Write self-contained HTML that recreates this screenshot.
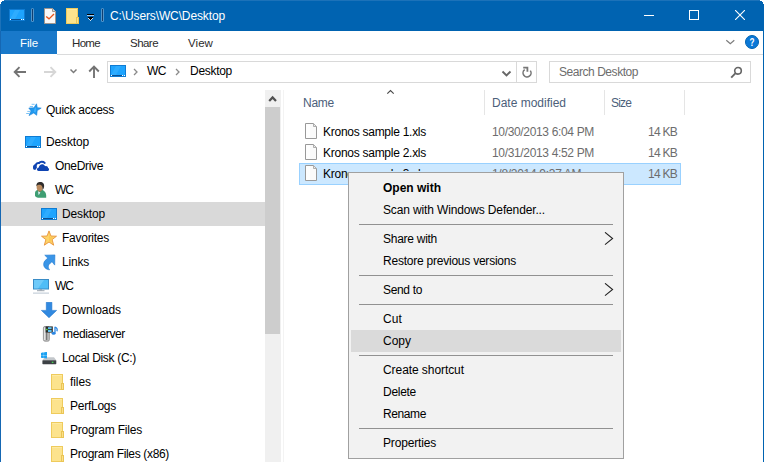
<!DOCTYPE html>
<html><head><meta charset="utf-8"><title>C:\Users\WC\Desktop</title>
<style>
html,body{margin:0;padding:0;background:#fff}
body{width:764px;height:462px;position:relative;overflow:hidden;font-family:"Liberation Sans",sans-serif;font-size:12px}
body>div,body>svg,body>span{position:absolute;display:block}
.t{line-height:16px;white-space:pre}
</style></head>
<body>
<div style="left:0px;top:0px;width:764px;height:31px;background:#0063b1;"></div>
<div style="left:0px;top:0px;width:764px;height:1px;background:#1c72b9;"></div>
<div style="left:0px;top:0px;width:1px;height:31px;background:#1c72b9;"></div>
<div style="left:0px;top:31px;width:1px;height:431px;background:#1567b3;"></div>
<div style="left:763px;top:31px;width:1px;height:431px;background:#0063b1;"></div>
<div style="left:0px;top:0px;width:4px;height:1px;background:#fff;"></div>
<div style="left:760px;top:0px;width:4px;height:1px;background:#fff;"></div>
<div style="left:0px;top:1px;width:2px;height:1px;background:#fff;"></div>
<div style="left:762px;top:1px;width:2px;height:1px;background:#fff;"></div>
<div style="left:0px;top:2px;width:1px;height:1px;background:#fff;"></div>
<div style="left:763px;top:2px;width:1px;height:1px;background:#fff;"></div>
<div style="left:0px;top:3px;width:1px;height:1px;background:#fff;"></div>
<div style="left:763px;top:3px;width:1px;height:1px;background:#fff;"></div>
<svg style="left:9px;top:9px" width="16" height="12" viewBox="0 0 16 12"><rect x="0.5" y="0.5" width="15" height="11" fill="#1ea4fe" stroke="#0f7bd2"/>
<path d="M6 1 L11 1 L6 10 L1 10 Z" fill="#3db3ff" opacity=".55"/>
<rect x="2" y="10" width="10" height="1" fill="#0a4f92"/>
<rect x="1" y="10" width="1" height="1" fill="#fff"/><rect x="12" y="10" width="1" height="1" fill="#fff"/><rect x="14" y="10" width="1" height="1" fill="#fff"/></svg>
<div style="left:31px;top:8px;width:3px;height:14px;background:rgba(255,255,255,.32);border-radius:1.5px;"></div>
<div style="left:32px;top:9px;width:1px;height:12px;background:#123f70;"></div>
<div style="left:101px;top:8px;width:3px;height:14px;background:rgba(255,255,255,.32);border-radius:1.5px;"></div>
<div style="left:102px;top:9px;width:1px;height:12px;background:#123f70;"></div>
<svg style="left:44px;top:8px" width="12" height="16" viewBox="0 0 12 16"><path d="M0.5 0.5 H8.5 L11.5 3.5 V15.5 H0.5 Z" fill="#f8f8f8" stroke="#a0968f"/>
<path d="M8.5 0.5 V3.5 H11.5" fill="#ddd" stroke="#a0968f"/>
<path d="M2.2 8.5 L5 10.9 L10 5.9" fill="none" stroke="#e8541c" stroke-width="1.4"/></svg>
<svg style="left:66px;top:8px" width="13" height="16" viewBox="0 0 13 16"><rect x="0.5" y="0.5" width="11" height="15" fill="#fce38d" stroke="#efcb5c"/>
<rect x="1" y="1" width="10" height="1" fill="#fdeaa3"/>
<rect x="10.5" y="9.5" width="2" height="6" fill="#fbe08a" stroke="#eac556"/></svg>
<svg style="left:86px;top:12px" width="10" height="10" viewBox="0 0 10 10"><rect x="1" y="2" width="7" height="1" fill="#000"/><rect x="1" y="3" width="7" height="1" fill="#a5cdf0"/>
<rect x="2" y="5" width="5" height="1" fill="#000"/><rect x="3" y="6" width="3" height="1" fill="#000"/><rect x="4" y="7" width="1" height="1" fill="#000"/>
<path d="M2 6h1v1h-1zM3 7h1v1h-1zM4 8h1v1h-1zM5 7h1v1h-1zM6 6h1v1h-1z" fill="#c9e0f5"/></svg>
<div style="left:644px;top:15px;width:10px;height:1px;background:#fff;"></div>
<div style="left:689px;top:10px;width:10px;height:10px;background:transparent;border:1px solid #fff;box-sizing:border-box;"></div>
<svg style="left:735px;top:10px" width="10" height="10" viewBox="0 0 10 10"><path d="M0 0 L10 10 M10 0 L0 10" stroke="#fff" stroke-width="1.1" fill="none"/></svg>
<div style="left:1px;top:31px;width:56px;height:23px;background:#1979ca;"></div>
<div style="left:57px;top:54px;width:706px;height:1px;background:#dadbdc;"></div>
<svg style="left:725px;top:38px" width="11" height="8" viewBox="0 0 11 8"><path d="M1.3 2.2 L5.3 5.8 L9.3 2.2" fill="none" stroke="#7c7c7c" stroke-width="1.2"/></svg>
<svg style="left:745px;top:35px" width="14" height="14" viewBox="0 0 14 14"><circle cx="7" cy="7" r="6.5" fill="#0a78d7" stroke="#0063b1"/>
<text x="7.1" y="10.9" font-family="Liberation Sans, sans-serif" font-size="10.5" font-weight="700" fill="#fff" text-anchor="middle" textLength="5" lengthAdjust="spacingAndGlyphs">?</text></svg>
<svg style="left:13px;top:66px" width="14" height="12" viewBox="0 0 14 12"><path d="M13 6 H2 M6.5 1.2 L1.7 6 L6.5 10.8" fill="none" stroke="#737373" stroke-width="1.9"/></svg>
<svg style="left:43px;top:66px" width="14" height="12" viewBox="0 0 14 12"><path d="M1 6 H12 M7.5 1.2 L12.3 6 L7.5 10.8" fill="none" stroke="#d6d6d6" stroke-width="1.9"/></svg>
<svg style="left:69px;top:68px" width="9" height="7" viewBox="0 0 9 7"><path d="M1.5 1.5 L4.5 4.5 L7.5 1.5" fill="none" stroke="#7a7a7a" stroke-width="1.5"/></svg>
<svg style="left:87px;top:65px" width="14" height="14" viewBox="0 0 14 14"><path d="M7 13 V2 M2.2 6.5 L7 1.7 L11.8 6.5" fill="none" stroke="#737373" stroke-width="1.9"/></svg>
<div style="left:107px;top:61px;width:430px;height:22px;background:#fff;border:1px solid #d9d9d9;box-sizing:border-box;"></div>
<svg style="left:110px;top:65px" width="16" height="12" viewBox="0 0 16 12"><rect x="0.5" y="0.5" width="15" height="11" fill="#1ea4fe" stroke="#0f7bd2"/>
<path d="M6 1 L11 1 L6 10 L1 10 Z" fill="#3db3ff" opacity=".55"/>
<rect x="2" y="10" width="10" height="1" fill="#0a4f92"/>
<rect x="1" y="10" width="1" height="1" fill="#fff"/><rect x="12" y="10" width="1" height="1" fill="#fff"/><rect x="14" y="10" width="1" height="1" fill="#fff"/></svg>
<svg style="left:132px;top:68px" width="7" height="8" viewBox="0 0 7 8"><path d="M2 1 L5 4 L2 7" fill="none" stroke="#8a8a8a" stroke-width="1.3"/></svg>
<svg style="left:174px;top:68px" width="7" height="8" viewBox="0 0 7 8"><path d="M2 1 L5 4 L2 7" fill="none" stroke="#8a8a8a" stroke-width="1.3"/></svg>
<svg style="left:501px;top:69.7px" width="11" height="8" viewBox="0 0 11 8"><path d="M1.5 1.5 L5.5 5.5 L9.5 1.5" fill="none" stroke="#666" stroke-width="1.9"/></svg>
<div style="left:516px;top:62px;width:1px;height:20px;background:#d9d9d9;"></div>
<svg style="left:521px;top:66px" width="12" height="13" viewBox="0 0 12 13"><path d="M9.3 4.6 A4 4 0 1 1 3.7 3.7" fill="none" stroke="#777" stroke-width="1.6"/>
<path d="M2.2 1.6 H6.4 V5.8" fill="none" stroke="#777" stroke-width="1.8"/></svg>
<div style="left:549px;top:61px;width:202px;height:22px;background:#fff;border:1px solid #d9d9d9;box-sizing:border-box;"></div>
<svg style="left:730px;top:66px" width="13" height="13" viewBox="0 0 13 13"><circle cx="8" cy="4.8" r="3.3" fill="none" stroke="#666" stroke-width="1.6"/><path d="M5.6 7.2 L1.2 11.6" stroke="#666" stroke-width="1.9"/></svg>
<div style="left:1px;top:202px;width:264px;height:24px;background:#d9d9d9;"></div>
<div style="left:265px;top:90px;width:16px;height:372px;background:#f0f0f0;"></div>
<div style="left:265px;top:107px;width:15px;height:227px;background:#cdcdcd;"></div>
<svg style="left:268px;top:94px" width="10" height="9" viewBox="0 0 10 9"><path d="M1.2 7 L4.6 3.4 L8 7" fill="none" stroke="#505050" stroke-width="2.2"/></svg>
<div style="left:283px;top:90px;width:1px;height:372px;background:#f3f3f3;"></div>
<svg style="left:26px;top:103px" width="16" height="14" viewBox="0 0 16 14"><path d="M10.5 0.8 L11.3 4.7 L15.2 5.1 L11.2 7.6 L10.7 12.3 L7.7 10 L3 12.6 L5 7.9 L2.8 5 L7.9 4.8 Z" fill="#2299ee" stroke="#1a82d6" stroke-width=".6" stroke-linejoin="round"/>
<path d="M8.4 6 L9.8 4 L10.2 7 L9.6 9.5 L7.8 8.8 Z" fill="#45b4ff" opacity=".8"/>
<path d="M5.6 1.3 H8.6 M3.8 3.5 H7 M1.3 8.4 H4.2 M0.2 10.5 H3.6" stroke="#7cc3f5" stroke-width="1"/></svg>
<svg style="left:25px;top:136px" width="16" height="12" viewBox="0 0 16 12"><rect x="0.5" y="0.5" width="15" height="11" fill="#1ea4fe" stroke="#0f7bd2"/>
<path d="M6 1 L11 1 L6 10 L1 10 Z" fill="#3db3ff" opacity=".55"/>
<rect x="2" y="10" width="10" height="1" fill="#0a4f92"/>
<rect x="1" y="10" width="1" height="1" fill="#fff"/><rect x="12" y="10" width="1" height="1" fill="#fff"/><rect x="14" y="10" width="1" height="1" fill="#fff"/></svg>
<svg style="left:33px;top:160px" width="16" height="11" viewBox="0 0 16 11"><path d="M1.3 8.6 C0.6 6.6 1.4 5.3 2.9 5 C3.1 3.5 4.6 2.7 6 3.1 C7.3 1.4 10 1.2 11.6 2.9" fill="none" stroke="#0f44b2" stroke-width="2" stroke-linecap="round"/>
<ellipse cx="2.1" cy="7.4" rx="1.9" ry="2.3" fill="#0f44b2"/>
<path d="M5.5 10.9 C3.4 10.9 3.5 7.8 5.8 7.6 C6 5 8.6 3.6 10.8 4.7 C11.5 5.1 11.9 5.7 12.1 6.2 C13.6 5.6 15.1 6.6 15.1 8 C16.4 8.3 16.4 10.9 15 10.9 Z" fill="#0f44b2" stroke="#fff" stroke-width="1.6"/>
<path d="M5.5 10.9 C3.4 10.9 3.5 7.8 5.8 7.6 C6 5 8.6 3.6 10.8 4.7 C11.5 5.1 11.9 5.7 12.1 6.2 C13.6 5.6 15.1 6.6 15.1 8 C16.4 8.3 16.4 10.9 15 10.9 Z" fill="#0f44b2"/></svg>
<svg style="left:34px;top:181px" width="14" height="17" viewBox="0 0 14 17"><path d="M1 14.8 V11.6 C1.4 10.2 2.4 9.2 3.6 8.8 H8.2 C10.6 10 12.2 12 12.2 14.4 V16.7 H4.2 C2.6 16.6 1.4 15.8 1 14.8 Z" fill="#3f9e73"/>
<path d="M4 10 L4.6 14.2 L6.4 11.4 Z" fill="#d9eef5"/>
<path d="M3.4 8.8 L4.6 10.6 L6.8 10.4 L8.2 8.6 Z" fill="#a27043"/>
<ellipse cx="5.7" cy="6" rx="3.1" ry="4" fill="#b98a5e"/>
<path d="M2.5 5.2 C2 2.4 3.9 0.9 6.2 0.9 C8.9 0.9 10.5 2.9 10.1 5.5 C9.9 7.2 9.2 8.4 8.4 9 C8.8 7 8.4 5.2 7.2 4.3 C5.6 3.5 3.5 3.8 2.5 5.2 Z" fill="#2f2d2c"/></svg>
<svg style="left:41px;top:208px" width="16" height="12" viewBox="0 0 16 12"><rect x="0.5" y="0.5" width="15" height="11" fill="#1ea4fe" stroke="#0f7bd2"/>
<path d="M6 1 L11 1 L6 10 L1 10 Z" fill="#3db3ff" opacity=".55"/>
<rect x="2" y="10" width="10" height="1" fill="#0a4f92"/>
<rect x="1" y="10" width="1" height="1" fill="#fff"/><rect x="12" y="10" width="1" height="1" fill="#fff"/><rect x="14" y="10" width="1" height="1" fill="#fff"/></svg>
<svg style="left:41px;top:230px" width="16" height="16" viewBox="0 0 16 16"><path d="M8 0.9 L9.9 6 L15.5 6.2 L11.1 9.6 L12.7 15.2 L8 12 L3.3 15.2 L4.9 9.6 L0.5 6.2 L6.1 6 Z" fill="#fdd468" stroke="#e8933a" stroke-width=".9" stroke-linejoin="round"/>
<path d="M8 3.5 L9.2 7 L12.5 7.2 L10 9.3 L10.8 12.6 L8 10.7 Z" fill="#fbc34f" opacity=".7"/></svg>
<svg style="left:43px;top:254px" width="13" height="17" viewBox="0 0 13 17"><path d="M1.75 1.2 L11.9 0.9 L11.7 11.1 L9 7.7 C6.5 9.5 4.8 11.5 5.3 13.2 C5.5 14.3 6 15.2 6.6 15.8 C3 15.6 0.2 13 0.7 9.5 C1 7.2 2.8 5.6 4.9 4.3 Z" fill="#3a95e7" stroke="#2079d0" stroke-width=".6" stroke-linejoin="round"/></svg>
<svg style="left:33px;top:279px" width="16" height="15" viewBox="0 0 16 15"><rect x="0.5" y="0.5" width="15" height="9.5" fill="#4fbdf7" stroke="#3a8cc6"/>
<path d="M1 1 H11 L5 9.5 H1 Z" fill="#8ad6fb" opacity=".55"/>
<rect x="6.5" y="10.4" width="2.5" height="1" fill="#8d97a0"/><rect x="4" y="11.2" width="7.5" height="1" fill="#9aa4ad"/><rect x="0" y="13.6" width="16" height="1" fill="#b9c5d1"/></svg>
<svg style="left:41px;top:302px" width="16" height="16" viewBox="0 0 16 16"><path d="M5.3 0.3 H10.9 V8.4 H15.6 L8 15.7 L0.4 8.4 H5.3 Z" fill="#3189e0" stroke="#2477cd" stroke-width=".6" stroke-linejoin="round"/></svg>
<svg style="left:42px;top:326px" width="16" height="16" viewBox="0 0 16 16"><rect x="1.4" y="0.4" width="6" height="14.8" rx="1.6" fill="#bdbdbd" stroke="#8a8a8a" stroke-width=".8"/>
<rect x="3.7" y="6.5" width="1.6" height="7.5" fill="#777"/><rect x="2.2" y="1.5" width="1.2" height="12.5" fill="#ededed"/>
<rect x="3.6" y="0.4" width="7.2" height="6.2" fill="#2b2b2b"/>
<rect x="6" y="1.2" width="3.6" height="2" fill="#5dc2f2"/><rect x="6" y="4" width="3.6" height="2" fill="#5dc2f2"/>
<rect x="4" y="2.8" width="1.6" height="1.4" fill="#55d24a"/>
<path d="M13 0.8 V6.8 M13 1 C14.8 1.6 15.6 3.2 14.9 5.2" fill="none" stroke="#2a86e2" stroke-width="1.3"/><ellipse cx="11.6" cy="7.2" rx="2" ry="1.5" fill="#2a86e2"/></svg>
<svg style="left:41px;top:352px" width="16" height="13" viewBox="0 0 16 13"><path d="M0 0.9 L2.6 0.5 V2.9 H0 Z M3.2 0.4 L5.9 0 V2.9 H3.2 Z M0 3.5 H2.6 V5.9 L0 5.5 Z M3.2 3.5 H5.9 V6.4 L3.2 6 Z" fill="#1ba1f2"/>
<path d="M3.6 5.3 H13 L15.3 8.3 H1.4 Z" fill="#c3c7cb"/>
<rect x="1.4" y="8.2" width="13.9" height="4" rx="0.6" fill="#3d4145"/>
<rect x="10.8" y="9.7" width="1.6" height="1.2" fill="#46e352"/>
<path d="M0 0.9 L2.6 0.5 V2.9 H0 Z M3.2 0.4 L5.9 0 V2.9 H3.2 Z M0 3.5 H2.6 V5.9 L0 5.5 Z M3.2 3.5 H5.9 V6.4 L3.2 6 Z" fill="#1ba1f2"/></svg>
<svg style="left:51px;top:374px" width="13" height="16" viewBox="0 0 13 16"><rect x="0.5" y="0.5" width="11" height="15" fill="#fce38d" stroke="#efcb5c"/>
<rect x="1" y="1" width="10" height="1" fill="#fdeaa3"/>
<rect x="10.5" y="9.5" width="2" height="6" fill="#fbe08a" stroke="#eac556"/></svg>
<svg style="left:51px;top:398px" width="13" height="16" viewBox="0 0 13 16"><rect x="0.5" y="0.5" width="11" height="15" fill="#fce38d" stroke="#efcb5c"/>
<rect x="1" y="1" width="10" height="1" fill="#fdeaa3"/>
<rect x="10.5" y="9.5" width="2" height="6" fill="#fbe08a" stroke="#eac556"/></svg>
<svg style="left:51px;top:422px" width="13" height="16" viewBox="0 0 13 16"><rect x="0.5" y="0.5" width="11" height="15" fill="#fce38d" stroke="#efcb5c"/>
<rect x="1" y="1" width="10" height="1" fill="#fdeaa3"/>
<rect x="10.5" y="9.5" width="2" height="6" fill="#fbe08a" stroke="#eac556"/></svg>
<svg style="left:51px;top:446px" width="13" height="16" viewBox="0 0 13 16"><rect x="0.5" y="0.5" width="11" height="15" fill="#fce38d" stroke="#efcb5c"/>
<rect x="1" y="1" width="10" height="1" fill="#fdeaa3"/>
<rect x="10.5" y="9.5" width="2" height="6" fill="#fbe08a" stroke="#eac556"/></svg>
<svg style="left:385px;top:89px" width="11" height="7" viewBox="0 0 11 7"><path d="M2.3 4.7 L5.5 1.5 L8.7 4.7" fill="none" stroke="#4a4a4a" stroke-width="1.15"/></svg>
<div style="left:484px;top:90px;width:1px;height:25px;background:#e5e5e5;"></div>
<div style="left:604px;top:90px;width:1px;height:25px;background:#e5e5e5;"></div>
<div style="left:684px;top:90px;width:1px;height:25px;background:#e5e5e5;"></div>
<div style="left:299px;top:163px;width:382px;height:22px;background:#cce8ff;border:1px solid #99d1ff;box-sizing:border-box;"></div>
<svg style="left:305px;top:123px" width="12" height="16" viewBox="0 0 12 16"><path d="M0.5 0.5 H8.5 L11.5 3.5 V15.5 H0.5 Z" fill="#fafafa" stroke="#999"/>
<rect x="1" y="1" width="4" height="14" fill="#fff" opacity=".8"/>
<path d="M8.5 0.8 V3.5 H11.2" fill="#ececec" stroke="#a6a6a6" stroke-width=".9"/></svg>
<svg style="left:305px;top:144px" width="12" height="16" viewBox="0 0 12 16"><path d="M0.5 0.5 H8.5 L11.5 3.5 V15.5 H0.5 Z" fill="#fafafa" stroke="#999"/>
<rect x="1" y="1" width="4" height="14" fill="#fff" opacity=".8"/>
<path d="M8.5 0.8 V3.5 H11.2" fill="#ececec" stroke="#a6a6a6" stroke-width=".9"/></svg>
<svg style="left:305px;top:165px" width="12" height="16" viewBox="0 0 12 16"><path d="M0.5 0.5 H8.5 L11.5 3.5 V15.5 H0.5 Z" fill="#fafafa" stroke="#999"/>
<rect x="1" y="1" width="4" height="14" fill="#fff" opacity=".8"/>
<path d="M8.5 0.8 V3.5 H11.2" fill="#ececec" stroke="#a6a6a6" stroke-width=".9"/></svg>
<span class="t" style="left:110px;top:8px;color:#fff;letter-spacing:-0.124px;">C:\Users\WC\Desktop</span>
<span class="t" style="left:20px;top:35px;color:#fff;letter-spacing:-0.133px;font-size:11.5px;">File</span>
<span class="t" style="left:72px;top:35px;color:#2b2b2b;letter-spacing:-0.672px;font-size:11.5px;">Home</span>
<span class="t" style="left:130px;top:35px;color:#2b2b2b;letter-spacing:-0.537px;font-size:11.5px;">Share</span>
<span class="t" style="left:188px;top:35px;color:#2b2b2b;letter-spacing:0.070px;font-size:11.5px;">View</span>
<span class="t" style="left:147px;top:63px;color:#000;letter-spacing:-0.500px;">WC</span>
<span class="t" style="left:190px;top:63px;color:#000;letter-spacing:-0.290px;">Desktop</span>
<span class="t" style="left:559px;top:64px;color:#6d6d6d;letter-spacing:-0.456px;">Search Desktop</span>
<span class="t" style="left:303px;top:95px;color:#4c607a;letter-spacing:-0.254px;">Name</span>
<span class="t" style="left:492px;top:95px;color:#4c607a;letter-spacing:-0.004px;">Date modified</span>
<span class="t" style="left:611px;top:95px;color:#4c607a;letter-spacing:-0.836px;">Size</span>
<span class="t" style="left:323px;top:124px;color:#000;letter-spacing:-0.266px;">Kronos sample 1.xls</span>
<span class="t" style="left:323px;top:145px;color:#000;letter-spacing:-0.266px;">Kronos sample 2.xls</span>
<span class="t" style="left:492px;top:124px;color:#6d6d6d;letter-spacing:-0.339px;">10/30/2013 6:04 PM</span>
<span class="t" style="left:492px;top:145px;color:#6d6d6d;letter-spacing:-0.339px;">10/31/2013 4:52 PM</span>
<span class="t" style="left:648px;top:124px;color:#6d6d6d;letter-spacing:-0.741px;">14 KB</span>
<span class="t" style="left:648px;top:145px;color:#6d6d6d;letter-spacing:-0.741px;">14 KB</span>
<span class="t" style="left:648px;top:166px;color:#6d6d6d;letter-spacing:-0.741px;">14 KB</span>
<span class="t" style="left:46px;top:102px;color:#000;letter-spacing:-0.280px;">Quick access</span>
<span class="t" style="left:46px;top:134px;color:#000;letter-spacing:-0.147px;">Desktop</span>
<span class="t" style="left:55px;top:158px;color:#000;letter-spacing:-0.336px;">OneDrive</span>
<span class="t" style="left:55px;top:182px;color:#000;letter-spacing:-1.000px;">WC</span>
<span class="t" style="left:62px;top:206px;color:#000;letter-spacing:-0.147px;">Desktop</span>
<span class="t" style="left:62px;top:230px;color:#000;letter-spacing:-0.262px;">Favorites</span>
<span class="t" style="left:62px;top:254px;color:#000;letter-spacing:-0.203px;">Links</span>
<span class="t" style="left:55px;top:278px;color:#000;letter-spacing:-1.000px;">WC</span>
<span class="t" style="left:62px;top:302px;color:#000;letter-spacing:-0.042px;">Downloads</span>
<span class="t" style="left:63px;top:326px;color:#000;letter-spacing:-0.366px;">mediaserver</span>
<span class="t" style="left:62px;top:350px;color:#000;letter-spacing:-0.312px;">Local Disk (C:)</span>
<span class="t" style="left:70px;top:374px;color:#000;letter-spacing:-0.069px;">files</span>
<span class="t" style="left:70px;top:398px;color:#000;letter-spacing:-0.254px;">PerfLogs</span>
<span class="t" style="left:70px;top:422px;color:#000;letter-spacing:-0.207px;">Program Files</span>
<span class="t" style="left:70px;top:446px;color:#000;letter-spacing:-0.335px;">Program Files (x86)</span>
<span class="t" style="left:323px;top:166px;color:#000;letter-spacing:-0.26px;clip-path:polygon(0 0,100% 0,100% 5px,25px 5px,25px 100%,0 100%)">Kronos sample 3.xls</span>
<span class="t" style="left:492px;top:166px;color:#6d6d6d;letter-spacing:-0.3px">1/8/2014 9:37 AM</span>
<div style="left:348px;top:172px;width:276px;height:287px;background:#f2f2f2;border:1px solid #a0a0a0;box-sizing:border-box;"></div>
<div style="left:351px;top:330px;width:270px;height:22px;background:#dadada;"></div>
<div style="left:359px;top:224px;width:254px;height:1px;background:#919191;"></div>
<div style="left:359px;top:275px;width:254px;height:1px;background:#919191;"></div>
<div style="left:359px;top:304px;width:254px;height:1px;background:#919191;"></div>
<div style="left:359px;top:355px;width:254px;height:1px;background:#919191;"></div>
<div style="left:359px;top:428px;width:254px;height:1px;background:#919191;"></div>
<svg style="left:604px;top:232px" width="10" height="14" viewBox="0 0 10 14"><path d="M1 0.3 L8.6 6.5 L1 12.7" fill="none" stroke="#222" stroke-width="1.05"/></svg>
<svg style="left:604px;top:283px" width="10" height="14" viewBox="0 0 10 14"><path d="M1 0.3 L8.6 6.5 L1 12.7" fill="none" stroke="#222" stroke-width="1.05"/></svg>
<span class="t" style="left:383px;top:180px;color:#000;letter-spacing:0.000px;font-weight:700;">Open with</span>
<span class="t" style="left:383px;top:202px;color:#000;letter-spacing:-0.141px;">Scan with Windows Defender...</span>
<span class="t" style="left:383px;top:231px;color:#000;letter-spacing:-0.270px;">Share with</span>
<span class="t" style="left:383px;top:253px;color:#000;letter-spacing:-0.229px;">Restore previous versions</span>
<span class="t" style="left:383px;top:282px;color:#000;letter-spacing:-0.339px;">Send to</span>
<span class="t" style="left:383px;top:311px;color:#000;letter-spacing:0.104px;">Cut</span>
<span class="t" style="left:383px;top:333px;color:#000;letter-spacing:-0.004px;">Copy</span>
<span class="t" style="left:383px;top:362px;color:#000;letter-spacing:-0.070px;">Create shortcut</span>
<span class="t" style="left:383px;top:384px;color:#000;letter-spacing:-0.281px;">Delete</span>
<span class="t" style="left:383px;top:406px;color:#000;letter-spacing:-0.393px;">Rename</span>
<span class="t" style="left:383px;top:435px;color:#000;letter-spacing:-0.170px;">Properties</span>
</body></html>
